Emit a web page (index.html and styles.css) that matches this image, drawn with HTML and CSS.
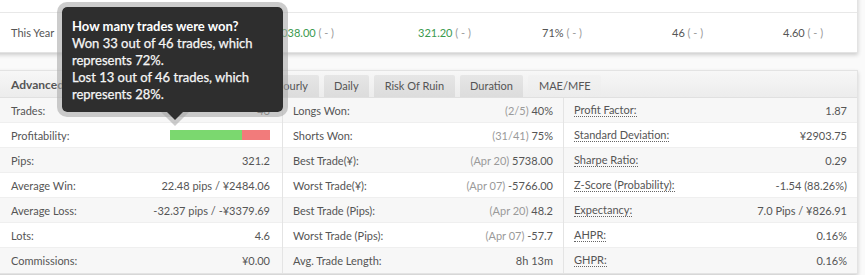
FILE: index.html
```html
<!DOCTYPE html>
<html>
<head>
<meta charset="utf-8">
<link rel="stylesheet" href="styles.css">
</head>
<body>
<div class="page">
  <div class="card summary">
    <div class="srow">
      <div class="scell label">This Month</div>
      <div class="scell">+38.04% <span class="muted">( - )</span></div>
      <div class="scell green">¥38038.00 <span class="muted">( - )</span></div>
      <div class="scell green">321.20 <span class="muted">( - )</span></div>
      <div class="scell">71% <span class="muted">( - )</span></div>
      <div class="scell">46 <span class="muted">( - )</span></div>
      <div class="scell">4.60 <span class="muted">( - )</span></div>
    </div>
    <div class="srow">
      <div class="scell label">This Year</div>
      <div class="scell">+38.04% <span class="muted">( - )</span></div>
      <div class="scell green">¥38038.00 <span class="muted">( - )</span></div>
      <div class="scell green">321.20 <span class="muted">( - )</span></div>
      <div class="scell">71% <span class="muted">( - )</span></div>
      <div class="scell">46 <span class="muted">( - )</span></div>
      <div class="scell">4.60 <span class="muted">( - )</span></div>
    </div>
  </div>

  <div class="card stats">
    <div class="stats-head">
      <div class="stats-title">Advanced Statistics</div>
      <div class="tabs">
        <div class="tab">Trades</div>
        <div class="tab">Summary</div>
        <div class="tab">Hourly</div>
        <div class="tab">Daily</div>
        <div class="tab">Risk Of Ruin</div>
        <div class="tab">Duration</div>
        <div class="tab active">MAE/MFE</div>
      </div>
    </div>
    <div class="stats-body">
      <div class="col">
        <div class="row"><span class="k">Trades:</span><span class="v">46</span></div>
        <div class="row"><span class="k">Profitability:</span><span class="bar"><span class="won" style="width:72%"></span><span class="lost" style="width:28%"></span></span></div>
        <div class="row"><span class="k">Pips:</span><span class="v">321.2</span></div>
        <div class="row"><span class="k">Average Win:</span><span class="v">22.48 pips / ¥2484.06</span></div>
        <div class="row"><span class="k">Average Loss:</span><span class="v">-32.37 pips / -¥3379.69</span></div>
        <div class="row"><span class="k">Lots:</span><span class="v">4.6</span></div>
        <div class="row"><span class="k">Commissions:</span><span class="v">¥0.00</span></div>
      </div>
      <div class="col">
        <div class="row"><span class="k">Longs Won:</span><span class="v"><span class="muted">(2/5)</span> 40%</span></div>
        <div class="row"><span class="k">Shorts Won:</span><span class="v"><span class="muted">(31/41)</span> 75%</span></div>
        <div class="row"><span class="k">Best Trade(¥):</span><span class="v"><span class="muted">(Apr 20)</span> 5738.00</span></div>
        <div class="row"><span class="k">Worst Trade(¥):</span><span class="v"><span class="muted">(Apr 07)</span> -5766.00</span></div>
        <div class="row"><span class="k">Best Trade (Pips):</span><span class="v"><span class="muted">(Apr 20)</span> 48.2</span></div>
        <div class="row"><span class="k">Worst Trade (Pips):</span><span class="v"><span class="muted">(Apr 07)</span> -57.7</span></div>
        <div class="row"><span class="k">Avg. Trade Length:</span><span class="v">8h 13m</span></div>
      </div>
      <div class="col">
        <div class="row"><span class="k dotted">Profit Factor:</span><span class="v">1.87</span></div>
        <div class="row"><span class="k dotted">Standard Deviation:</span><span class="v">¥2903.75</span></div>
        <div class="row"><span class="k dotted">Sharpe Ratio:</span><span class="v">0.29</span></div>
        <div class="row"><span class="k dotted">Z-Score (Probability):</span><span class="v">-1.54 (88.26%)</span></div>
        <div class="row"><span class="k dotted">Expectancy:</span><span class="v">7.0 Pips / ¥826.91</span></div>
        <div class="row"><span class="k dotted">AHPR:</span><span class="v">0.16%</span></div>
        <div class="row"><span class="k dotted">GHPR:</span><span class="v">0.16%</span></div>
      </div>
    </div>
  </div>

  <div class="tooltip">
    <div class="tip-title">How many trades were won?</div>
    <div>Won 33 out of 46 trades, which represents 72%.</div>
    <div>Lost 13 out of 46 trades, which represents 28%.</div>
  </div>
</div>
</body>
</html>
```

FILE: styles.css
```css
html, body {
  margin: 0;
  padding: 0;
  background: #fafafa;
  overflow: hidden;
}
body {
  font-family: Lato, "Liberation Sans", sans-serif;
  font-size: 11px;
  color: #555;
}
.page {
  position: relative;
  width: 865px;
  height: 275px;
  overflow: hidden;
}
.card {
  background: #fff;
  margin: 0 7px 0 -5px;
  border: 1px solid #e3e3e3;
  box-shadow: 0 2px 4px rgba(0, 0, 0, 0.18);
}
.summary {
  margin-top: -27px;
  border-top: none;
}
.srow {
  display: grid;
  grid-template-columns: 125px 131px 156px 124px 130px 111px 1fr;
  height: 39px;
  align-items: center;
}
.srow + .srow {
  border-top: 1px solid #e8e8e8;
}
.scell {
  padding-left: 10px;
  white-space: nowrap;
}
.scell.label {
  padding-left: 15px;
}
.green { color: #3a9a4e; }
.muted { color: #9a9a9a; }

.stats {
  margin-top: 17px;
}
.stats-head {
  display: flex;
  align-items: flex-end;
  height: 26px;
  background: linear-gradient(#f7f7f7, #ececec);
  border-bottom: 1px solid #e0e0e0;
}
.stats-title {
  width: 125px;
  padding-left: 15px;
  align-self: center;
  font-weight: bold;
  font-size: 12px;
  color: #555;
}
.tabs {
  display: flex;
  gap: 5px;
}
.tab {
  height: 22px;
  line-height: 22px;
  padding: 0 10.5px;
  background: linear-gradient(#e6e6e6, #dcdcdc);
  border-radius: 2px 2px 0 0;
  color: #555;
}
.tab.active {
  background: linear-gradient(#f2f2f2, #ececec);
}
.stats-body {
  display: grid;
  grid-template-columns: 286px 281px 1fr;
}
.col + .col {
  border-left: 1px solid #e4e4e4;
}
.row {
  display: flex;
  align-items: center;
  justify-content: space-between;
  height: 25px;
  padding: 0 10px;
  box-sizing: border-box;
  border-bottom: 1px solid #efefef;
  white-space: nowrap;
}
.col:first-child .row {
  padding-left: 15px;
  padding-right: 12px;
}
.row:nth-child(odd) {
  background: #f7f7f7;
}
.row:last-child {
  border-bottom: none;
}
.dotted {
  border-bottom: 1px dotted #666;
  line-height: 12px;
}
.bar {
  display: flex;
  width: 100px;
  height: 10px;
}
.won { background: #7bd86f; }
.lost { background: #f27b7b; }

.tooltip {
  position: absolute;
  left: 57px;
  top: 2px;
  width: 201px;
  padding: 11px 10px 9px;
  background: #2e2e2e;
  background-clip: padding-box;
  border: 5px solid rgba(170, 170, 170, 0.6);
  border-radius: 10px;
  color: #f6f6f6;
  font-size: 13px;
  line-height: 17px;
  -webkit-text-stroke: 0.25px #f6f6f6;
}
.tip-title {
  font-weight: bold;
  color: #fff;
  -webkit-text-stroke: 0;
}
.tooltip::before {
  content: "";
  position: absolute;
  left: 99px;
  top: 100%;
  border-style: solid;
  border-width: 14px 14px 0;
  border-color: rgba(170, 170, 170, 0.6) transparent transparent;
}
.tooltip::after {
  content: "";
  position: absolute;
  left: 105px;
  top: 100%;
  border-style: solid;
  border-width: 8px 8px 0;
  border-color: #2e2e2e transparent transparent;
}
```
